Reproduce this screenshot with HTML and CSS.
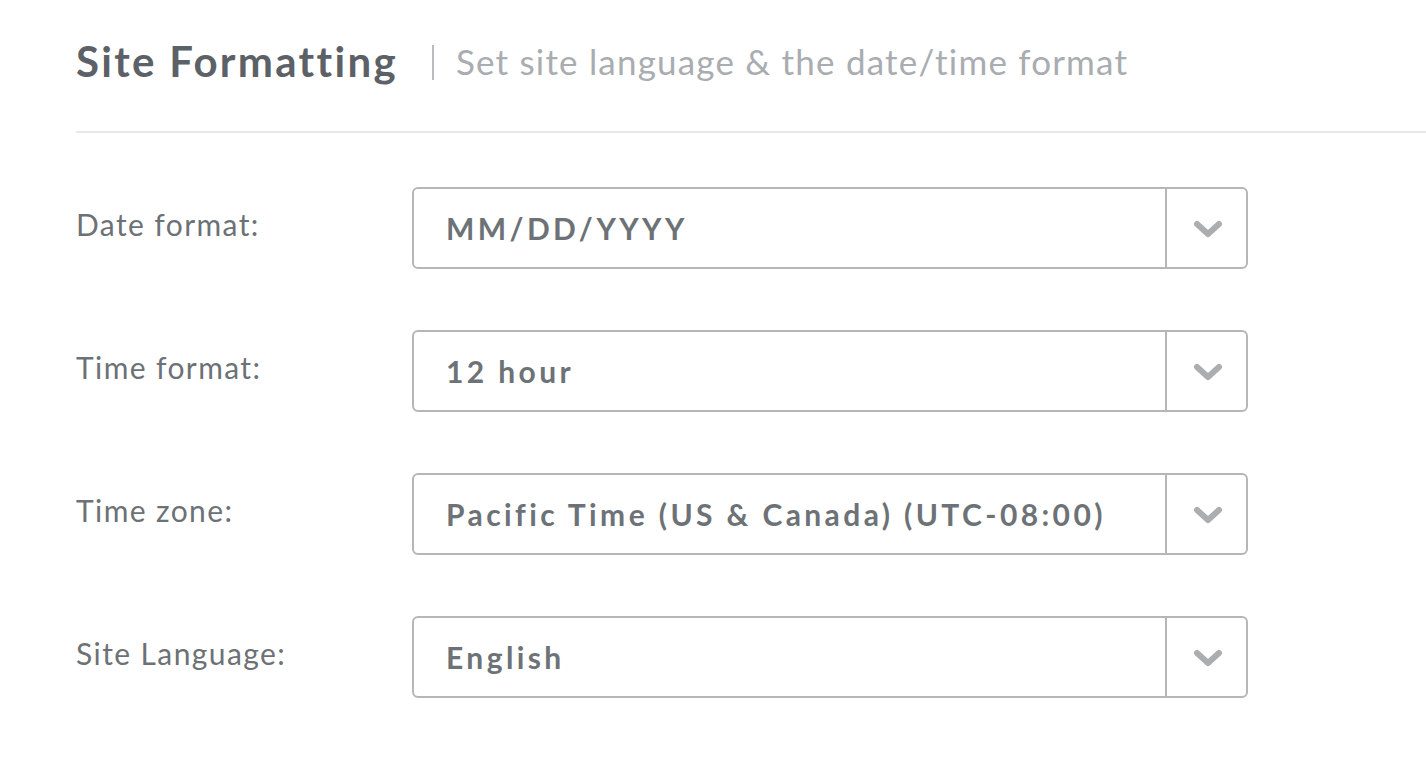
FILE: index.html
```html
<!DOCTYPE html>
<html lang="en">
<head>
    <meta charset="UTF-8">
    <title>Site Formatting</title>
    <link rel="stylesheet" href="styles.css">
</head>
<body>
    <header class="page-header">
        <h1>Site Formatting</h1>
        <span class="divider"></span>
        <p class="subtitle">Set site language &amp; the date/time format</p>
    </header>

    <form class="settings">
        <div class="row">
            <label>Date format:</label>
            <div class="select">
                <span class="value">MM/DD/YYYY</span>
                <span class="arrow"><svg width="30" height="20" viewBox="0 0 30 20"><path d="M4 5 L15 15 L26 5" fill="none" stroke="#abaeb1" stroke-width="6" stroke-linecap="round" stroke-linejoin="round"/></svg></span>
            </div>
        </div>
        <div class="row">
            <label>Time format:</label>
            <div class="select">
                <span class="value">12 hour</span>
                <span class="arrow"><svg width="30" height="20" viewBox="0 0 30 20"><path d="M4 5 L15 15 L26 5" fill="none" stroke="#abaeb1" stroke-width="6" stroke-linecap="round" stroke-linejoin="round"/></svg></span>
            </div>
        </div>
        <div class="row">
            <label>Time zone:</label>
            <div class="select">
                <span class="value">Pacific Time (US &amp; Canada) (UTC-08:00)</span>
                <span class="arrow"><svg width="30" height="20" viewBox="0 0 30 20"><path d="M4 5 L15 15 L26 5" fill="none" stroke="#abaeb1" stroke-width="6" stroke-linecap="round" stroke-linejoin="round"/></svg></span>
            </div>
        </div>
        <div class="row">
            <label>Site Language:</label>
            <div class="select">
                <span class="value">English</span>
                <span class="arrow"><svg width="30" height="20" viewBox="0 0 30 20"><path d="M4 5 L15 15 L26 5" fill="none" stroke="#abaeb1" stroke-width="6" stroke-linecap="round" stroke-linejoin="round"/></svg></span>
            </div>
        </div>
    </form>
</body>
</html>
```

FILE: styles.css
```css
body {
    font-family: 'Lato', sans-serif;
    margin: 0;
    padding: 0 0 0 76px;
    background-color: #ffffff;
}

/* Header */
.page-header {
    display: flex;
    align-items: center;
    height: 133px;
    border-bottom: 2px solid #e7e8e9;
    box-sizing: border-box;
    padding-bottom: 10px;
}

.page-header h1 {
    margin: 0;
    font-size: 42px;
    font-weight: 700;
    color: #5b6167;
    letter-spacing: 2.3px;
}

.divider {
    width: 2px;
    height: 35px;
    background-color: #b9bcbf;
    margin: 4px 22px 0 34px;
}

.subtitle {
    margin: 0;
    font-size: 35px;
    color: #a9acb0;
    letter-spacing: 1.2px;
}

/* Form rows */
.settings {
    padding-top: 54px;
}

.row {
    display: flex;
    align-items: center;
    height: 82px;
    margin-bottom: 61px;
}

.row label {
    width: 336px;
    font-size: 30px;
    color: #6c7176;
    letter-spacing: 1.4px;
    margin-top: -8px;
}

.select {
    display: flex;
    width: 836px;
    height: 82px;
    box-sizing: border-box;
    border: 2px solid #b4b6b9;
    border-radius: 6px;
}

.select .value {
    flex: 1;
    display: flex;
    align-items: center;
    padding-left: 32px;
    font-size: 30px;
    font-weight: 700;
    color: #6d7277;
    letter-spacing: 3.4px;
}

.select .arrow {
    width: 76px;
    border-left: 2px solid #b4b6b9;
    display: flex;
    align-items: center;
    justify-content: center;
    padding: 2px 0 0 3px;
}
```
